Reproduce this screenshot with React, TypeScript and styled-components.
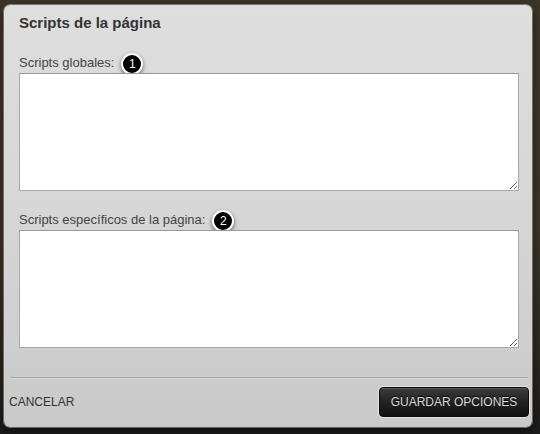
import { createGlobalStyle, styled } from "styled-components";

const GlobalStyle = createGlobalStyle`
  html, body {
    margin: 0;
    padding: 0;
    height: 100%;
  }
  body {
    font-family: "Liberation Sans", Arial, sans-serif;
    background: linear-gradient(180deg, #3d3527 0%, #3a3326 55%, #2a261f 85%, #1b1b1b 100%);
  }
`;

const Backdrop = styled.div`
  width: 540px;
  height: 434px;
  padding: 5px 8px 7px 4px;
  box-sizing: border-box;
`;

const Modal = styled.div`
  height: 100%;
  box-sizing: border-box;
  border-radius: 6px;
  background: linear-gradient(180deg, #dedede 0%, #d6d6d6 50%, #c9c9c9 100%);
  box-shadow: 0 0 0 1px rgba(255, 255, 255, 0.35), 0 3px 8px rgba(0, 0, 0, 0.6);
  display: flex;
  flex-direction: column;
`;

const Title = styled.h2`
  margin: 0;
  padding: 8px 15px 0;
  font-size: 15px;
  line-height: 20px;
  font-weight: bold;
  color: #333;
`;

const Body = styled.div`
  padding: 0 13px 0 15px;
  display: flex;
  flex-direction: column;
`;

const LabelRow = styled.div<{ $top: number }>`
  display: flex;
  align-items: center;
  height: 18px;
  margin-top: ${(p) => p.$top}px;
  margin-bottom: 2px;
  font-size: 13px;
  color: #444;
`;

const Badge = styled.span`
  width: 18px;
  height: 18px;
  margin-left: 7px;
  margin-top: 4px;
  border-radius: 50%;
  border: 2px solid #fff;
  background: #000;
  color: #fff;
  font-size: 12px;
  display: inline-flex;
  align-items: center;
  justify-content: center;
  box-shadow: 0 2px 4px rgba(0, 0, 0, 0.55);
`;

const Area = styled.textarea`
  width: 500px;
  height: 118px;
  box-sizing: border-box;
  margin: 0;
  border: 1px solid #a8a8a8;
  border-top-color: #999;
  background: #fff;
  resize: both;
  font-family: "Liberation Mono", monospace;
  font-size: 12px;
`;

const Divider = styled.hr`
  margin: 29px 4px 0 6px;
  border: 0;
  border-top: 1px solid #a6a6a6;
  border-bottom: 1px solid #dadada;
  height: 0;
`;

const Footer = styled.div`
  display: flex;
  align-items: center;
  justify-content: space-between;
  padding: 8px 3px 0 5px;
`;

const CancelLink = styled.a`
  font-size: 12px;
  color: #333;
  text-decoration: none;
  cursor: pointer;
`;

const SaveButton = styled.button`
  width: 150px;
  height: 30px;
  border-radius: 4px;
  border: 1px solid #0a0a0a;
  background: linear-gradient(180deg, #3c3c3c 0%, #222 50%, #111 100%);
  box-shadow: 0 0 0 1px rgba(255, 255, 255, 0.5), inset 0 1px 0 rgba(255, 255, 255, 0.15);
  color: #dcdcdc;
  font-family: "Liberation Sans", Arial, sans-serif;
  font-size: 12px;
  text-shadow: 0 -1px 0 #000;
  cursor: pointer;
`;

export default function App() {
  return (
    <>
      <GlobalStyle />
      <Backdrop>
        <Modal>
          <Title>Scripts de la página</Title>
          <Body>
            <LabelRow $top={20}>
              Scripts globales:
              <Badge>1</Badge>
            </LabelRow>
            <Area />
            <LabelRow $top={19}>
              Scripts específicos de la página:
              <Badge>2</Badge>
            </LabelRow>
            <Area />
          </Body>
          <Divider />
          <Footer>
            <CancelLink>CANCELAR</CancelLink>
            <SaveButton>GUARDAR OPCIONES</SaveButton>
          </Footer>
        </Modal>
      </Backdrop>
    </>
  );
}
